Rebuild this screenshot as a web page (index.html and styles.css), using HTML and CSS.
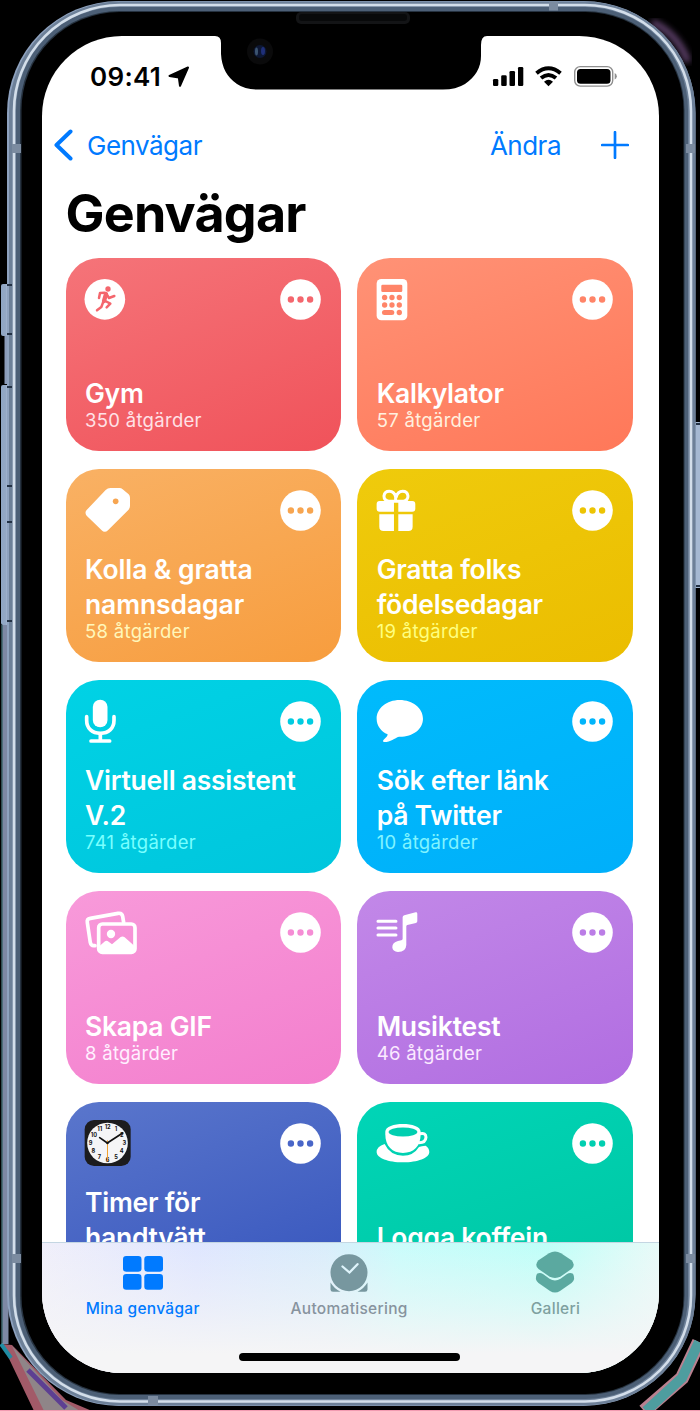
FILE: index.html
```html
<!DOCTYPE html>
<html lang="sv">
<head>
<meta charset="utf-8">
<title>Genvägar</title>
<link rel="stylesheet" href="styles.css">
</head>
<body>
<div class="stage">
<svg class="device" viewBox="0 0 700 1411" width="700" height="1411" aria-hidden="true">
  <defs>
    <filter id="soft"><feGaussianBlur stdDeviation="0.6"/></filter>
    <filter id="haze"><feGaussianBlur stdDeviation="3"/></filter>
    <linearGradient id="button"><stop offset="0" stop-color="#8fa6c4"/><stop offset=".45" stop-color="#94a8c5"/><stop offset=".7" stop-color="#c3d3e8"/><stop offset="1" stop-color="#536986"/></linearGradient>
  </defs>
  <path d="M652 22 Q678 34 688 62" stroke="#6b4a78" stroke-width="6" fill="none" filter="url(#haze)"/>
  <path d="M2 1344 L34 1411 H92 L66 1400 L12 1345Z" fill="#a25a68"/>
  <path d="M12 1346 L44 1411 H80 L62 1400Z" fill="#8f8588"/>
  <path d="M28 1370 L66 1408" stroke="#5d3f92" stroke-width="5"/>
  <path d="M1 1344 L11 1358" stroke="#218ca3" stroke-width="4"/>
  <path d="M699 1342 L682 1378 L644 1411" stroke="#b9808f" stroke-width="14" fill="none"/>
  <path d="M699 1342 L682 1378 L646 1411" stroke="#4e9d9f" stroke-width="10" fill="none"/>
  <path d="M0 1410.500 H700" stroke="#f29bb1"/>
  <path d="M5.500 625 V1344" stroke="#7d88a4" stroke-width="6"/>
  <path d="M2 625 V1344" stroke="#5f97a2"/>
  <rect x="1" y="284" width="11" height="52" rx="2" fill="url(#button)"/>
  <rect x="1" y="385" width="11" height="240" rx="2" fill="url(#button)"/>
  <path d="M7 336 V384" stroke="#8b9bb9" stroke-width="5"/>
  <rect x="691" y="422" width="10" height="166" rx="2" fill="#a5b8d2"/>
  <rect x="7" y="1" width="688.500" height="1405" rx="112" fill="#8ea2bf"/>
  <rect x="9" y="1.500" width="686.500" height="1404" rx="111" fill="#6d8098"/>
  <rect x="16" y="7" width="672" height="1392" rx="103" fill="#4c5f76"/>
  <rect x="14" y="5" width="677" height="1396.500" rx="106" fill="none" stroke="#d3deea" stroke-width="2.600" filter="url(#soft)"/>
  <rect x="20" y="11" width="664.500" height="1384" rx="99" fill="#27333f" filter="url(#soft)"/>
  <rect x="21.500" y="12" width="662" height="1382" rx="98" fill="#000"/>
  <g fill="#7b8ba0">
    <path d="M549 1.500h9v9h-9zM12 144h9v9h-9zM686 144h9v9h-9zM12 1254h9v9h-9zM686 1254h9v9h-9zM148 1396h10v9h-10z"/>
  </g>
  <g stroke="#233144" stroke-width="2">
    <path d="M7 285h5M7 334h5M7 387h5M7 486h5M7 522h5M7 621h5M696 424h4M696 586h4"/>
  </g>
  <rect x="296" y="12" width="114" height="12" rx="5" fill="#131416"/>
  <rect x="299" y="14" width="108" height="7" rx="3" fill="#08090a"/>
</svg>

<main class="screen">
  <svg class="notch" width="274" height="56" viewBox="0 0 274 56" aria-hidden="true">
    <path d="M0 0 Q6 0 6 7 V18 Q7 38 22 48 Q30 53.500 42 53.500 H228 Q241 53.500 250 48 Q266 37 266 20 V9 Q266 0 272 0 Z" fill="#000"/>
    <circle cx="45" cy="15.500" r="13" fill="#0a0a0b"/><circle cx="45" cy="15.500" r="6.500" fill="#0d1733"/><ellipse cx="41.500" cy="15.500" rx="1.500" ry="4" fill="#3c5470"/><ellipse cx="48" cy="15" rx="2" ry="4" fill="#1f2f78"/>
  </svg>

  <header class="status">
    <div class="time"><span>09:41</span>
      <svg width="22" height="22" viewBox="0 0 22 22"><path d="M20 1.500 L12 19.800 L10.800 11.400 L1.500 10Z" stroke="#000" stroke-width="2" stroke-linejoin="round"/></svg>
    </div>
    <svg class="signals" width="126" height="24" viewBox="0 0 126 24">
      <rect x="1" y="14" width="5.300" height="7" rx="1.300"/><rect x="9.200" y="10.300" width="5.500" height="10.700" rx="1.300"/><rect x="17.500" y="6" width="5.500" height="15" rx="1.300"/><rect x="26" y="2" width="5.300" height="19" rx="1.300"/>
      <g fill="none" stroke="#000" stroke-width="4"><path d="M44.500 8.200 Q56.500 -1.600 68.500 8.200"/><path d="M49 13 Q56.500 7 64 13"/></g>
      <path d="M52 16.700 Q56.500 13 61 16.700 L56.500 21.300Z"/>
      <rect x="82.700" y="1.600" width="38" height="19.500" rx="5.500" fill="none" stroke="#8f8f8f" stroke-width="1.400"/>
      <rect x="85" y="4" width="33.500" height="14.700" rx="3.500"/><path d="M122.700 8 Q124.800 9 124.800 11.300 T122.700 14.500Z" fill="#8f8f8f"/>
    </svg>
  </header>

  <nav class="nav">
    <a class="back"><svg width="19" height="32" viewBox="0 0 19 32"><path d="M16.500 2.500 L2.500 16 L16.500 29.500" /></svg><span>Genvägar</span></a>
    <a class="edit">Ändra</a>
    <svg class="plus" width="28" height="28" viewBox="0 0 28 28"><path d="M14 1.200V26.800M1.200 14H26.800"/></svg>
  </nav>
  <h1>Genvägar</h1>

  <section class="cards">
    <article class="card red">
      <div class="top"><svg class="icon" viewBox="0 0 56 50"><g transform="translate(-25 -26) scale(.33333)"><circle cx="134.500" cy="148" r="61"/><circle class="cut" cx="144" cy="117" r="8"/><g class="line" stroke-width="7.500"><path d="M117 144 L120 129 L134 128"/><path d="M139 131 L147 144 L163 138"/><path d="M136 153 L151 161 L140 172"/><path d="M130 155 L124 171 L111 181"/><path d="M138 132 L132 153" stroke-width="13"/></g></g></svg>
      <svg class="more" viewBox="0 0 41 41"><circle cx="20.500" cy="20.500" r="20.300"/><path class="cut" d="M7.700 20.500a3.200 3.200 0 1 0 6.400 0a3.200 3.200 0 1 0-6.400 0M17.300 20.500a3.200 3.200 0 1 0 6.400 0a3.200 3.200 0 1 0-6.400 0M26.900 20.500a3.200 3.200 0 1 0 6.400 0a3.200 3.200 0 1 0-6.400 0"/></svg></div>
      <h2>Gym</h2><p>350 åtgärder</p>
    </article>
    <article class="card coral">
      <div class="top"><svg class="icon" viewBox="0 0 56 50"><g transform="translate(-26.700 -26) scale(.33333)"><rect x="79" y="87" width="92" height="124" rx="14"/><g class="cut"><rect x="93" y="104" width="63" height="22" rx="4"/><circle cx="103" cy="142.500" r="8"/><circle cx="125" cy="142.500" r="8"/><circle cx="147" cy="142.500" r="8"/><circle cx="103" cy="165" r="8"/><circle cx="125" cy="165" r="8"/><circle cx="147" cy="165" r="8"/><rect x="95" y="180" width="37" height="15" rx="7.500"/><circle cx="147" cy="187.500" r="8"/></g></g></svg>
      <svg class="more" viewBox="0 0 41 41"><circle cx="20.500" cy="20.500" r="20.300"/><path class="cut" d="M7.700 20.500a3.200 3.200 0 1 0 6.400 0a3.200 3.200 0 1 0-6.400 0M17.300 20.500a3.200 3.200 0 1 0 6.400 0a3.200 3.200 0 1 0-6.400 0M26.900 20.500a3.200 3.200 0 1 0 6.400 0a3.200 3.200 0 1 0-6.400 0"/></svg></div>
      <h2>Kalkylator</h2><p>57 åtgärder</p>
    </article>
    <article class="card orange">
      <div class="top"><svg class="icon" viewBox="0 0 56 50"><g transform="translate(-25 -27) scale(.33333)"><path d="M151 84 H178 Q184 84 188 88 L206 103 Q210 107 210 113 V138 Q210 145 205 150 L144 211 Q134 220 125 211 L80 167 Q73 158 80 150 L137 90 Q143 84 151 84Z"/><circle class="cut" cx="167" cy="124" r="8.500"/></g></svg>
      <svg class="more" viewBox="0 0 41 41"><circle cx="20.500" cy="20.500" r="20.300"/><path class="cut" d="M7.700 20.500a3.200 3.200 0 1 0 6.400 0a3.200 3.200 0 1 0-6.400 0M17.300 20.500a3.200 3.200 0 1 0 6.400 0a3.200 3.200 0 1 0-6.400 0M26.900 20.500a3.200 3.200 0 1 0 6.400 0a3.200 3.200 0 1 0-6.400 0"/></svg></div>
      <h2 class="wide">Kolla &amp; gratta<br>namnsdagar</h2><p>58 åtgärder</p>
    </article>
    <article class="card yellow">
      <div class="top"><svg class="icon" viewBox="0 0 56 50"><g transform="translate(-26.700 -27) scale(.33333)"><path d="M131 123V155H88Q79 155 79 146V132Q79 123 88 123ZM144 123V155H186Q195 155 195 146V132Q195 123 186 123ZM131 163V213H100Q87 213 87 200V163ZM144 163V213H174Q187 213 187 200V163Z"/><path class="wire" stroke-width="9" d="M132 124 H115 Q101 121 101 108 Q103 94 117 94 Q132 94 136 111 V124 M142 124 H160 Q173 121 173 108 Q171 94 157 94 Q142 94 138 111"/></g></svg>
      <svg class="more" viewBox="0 0 41 41"><circle cx="20.500" cy="20.500" r="20.300"/><path class="cut" d="M7.700 20.500a3.200 3.200 0 1 0 6.400 0a3.200 3.200 0 1 0-6.400 0M17.300 20.500a3.200 3.200 0 1 0 6.400 0a3.200 3.200 0 1 0-6.400 0M26.900 20.500a3.200 3.200 0 1 0 6.400 0a3.200 3.200 0 1 0-6.400 0"/></svg></div>
      <h2>Gratta folks<br>födelsedagar</h2><p>19 åtgärder</p>
    </article>
    <article class="card cyan">
      <div class="top"><svg class="icon" viewBox="0 0 56 50"><g transform="translate(-25 -18) scale(.33333)"><rect x="98.500" y="59" width="44" height="83" rx="22"/><path class="wire" stroke-width="11" d="M80 110V121C80 146 97 160 121 160S162 146 162 121V110M121 160V182M93 183H149"/></g></svg>
      <svg class="more" viewBox="0 0 41 41"><circle cx="20.500" cy="20.500" r="20.300"/><path class="cut" d="M7.700 20.500a3.200 3.200 0 1 0 6.400 0a3.200 3.200 0 1 0-6.400 0M17.300 20.500a3.200 3.200 0 1 0 6.400 0a3.200 3.200 0 1 0-6.400 0M26.900 20.500a3.200 3.200 0 1 0 6.400 0a3.200 3.200 0 1 0-6.400 0"/></svg></div>
      <h2>Virtuell assistent<br>V.2</h2><p>741 åtgärder</p>
    </article>
    <article class="card blue">
      <div class="top"><svg class="icon" viewBox="0 0 56 50"><g transform="translate(-26.700 -238) scale(.33333)"><path d="M148 720C188 720 218 745 218 776C218 808 187 831 146 830C133 834 121 846 102 846Q95 845 100 839Q112 830 112 823C92 814 79 797 79 776C79 745 109 720 148 720Z"/></g></svg>
      <svg class="more" viewBox="0 0 41 41"><circle cx="20.500" cy="20.500" r="20.300"/><path class="cut" d="M7.700 20.500a3.200 3.200 0 1 0 6.400 0a3.200 3.200 0 1 0-6.400 0M17.300 20.500a3.200 3.200 0 1 0 6.400 0a3.200 3.200 0 1 0-6.400 0M26.900 20.500a3.200 3.200 0 1 0 6.400 0a3.200 3.200 0 1 0-6.400 0"/></svg></div>
      <h2>Sök efter länk<br>på Twitter</h2><p>10 åtgärder</p>
    </article>
    <article class="card pink">
      <div class="top"><svg class="icon" viewBox="0 0 56 50"><g transform="translate(-25 -229) scale(.33333)"><path class="wire" stroke-width="11" d="M105 797H101Q93 797 91 788L82 728Q80 717 91 715L174 700Q186 698 188 709L191 727"/><rect class="wire" x="116" y="732" width="109" height="85" rx="11" stroke-width="11"/><circle cx="153" cy="762" r="12.500"/><path d="M116 800L135 784Q140 780 146 785L156 793L182 771Q188 767 194 772L226 800V817H116Z"/></g></svg>
      <svg class="more" viewBox="0 0 41 41"><circle cx="20.500" cy="20.500" r="20.300"/><path class="cut" d="M7.700 20.500a3.200 3.200 0 1 0 6.400 0a3.200 3.200 0 1 0-6.400 0M17.300 20.500a3.200 3.200 0 1 0 6.400 0a3.200 3.200 0 1 0-6.400 0M26.900 20.500a3.200 3.200 0 1 0 6.400 0a3.200 3.200 0 1 0-6.400 0"/></svg></div>
      <h2>Skapa GIF</h2><p>8 åtgärder</p>
    </article>
    <article class="card purple">
      <div class="top"><svg class="icon" viewBox="0 0 56 50"><g transform="translate(-26.700 -29) scale(.33333)"><path class="wire" stroke-width="9" d="M83 124H137M83 144H137M83 165H137"/><path d="M157 112Q157 107 162 106L196 97Q201 96 201 101V124Q201 128 197 129L171 135Q168 136 168 139V195Q167 216 143 216Q127 215 126 202Q126 187 143 183L153 181Q157 180 157 176Z"/></g></svg>
      <svg class="more" viewBox="0 0 41 41"><circle cx="20.500" cy="20.500" r="20.300"/><path class="cut" d="M7.700 20.500a3.200 3.200 0 1 0 6.400 0a3.200 3.200 0 1 0-6.400 0M17.300 20.500a3.200 3.200 0 1 0 6.400 0a3.200 3.200 0 1 0-6.400 0M26.900 20.500a3.200 3.200 0 1 0 6.400 0a3.200 3.200 0 1 0-6.400 0"/></svg></div>
      <h2>Musiktest</h2><p>46 åtgärder</p>
    </article>
    <article class="card peek indigo">
      <div class="top"><svg class="icon" viewBox="0 0 56 50"><g transform="translate(-85 -30) scale(.33333)"><rect x="254" y="90" width="138" height="138" rx="28" fill="#1c1c1e"/><circle cx="322.500" cy="159" r="61" fill="#f5f5f7"/>
        <g class="dial"><text x="323" y="118">12</text><text x="348" y="124">1</text><text x="365" y="141">2</text><text x="373" y="166">3</text><text x="365" y="190">4</text><text x="348" y="208">5</text><text x="323" y="215">6</text><text x="298" y="208">7</text><text x="280" y="190">8</text><text x="272" y="166">9</text><text x="282" y="142">10</text><text x="299" y="124">11</text></g>
        <path d="M322 159L299 143M322 159L368 129" stroke="#111" stroke-width="5" stroke-linecap="round"/><path d="M322.500 151V214" stroke="#f0a02c" stroke-width="3"/><circle cx="322.500" cy="159" r="3.500" fill="#111"/></g></svg>
      <svg class="more" viewBox="0 0 41 41"><circle cx="20.500" cy="20.500" r="20.300"/><path class="cut" d="M7.700 20.500a3.200 3.200 0 1 0 6.400 0a3.200 3.200 0 1 0-6.400 0M17.300 20.500a3.200 3.200 0 1 0 6.400 0a3.200 3.200 0 1 0-6.400 0M26.900 20.500a3.200 3.200 0 1 0 6.400 0a3.200 3.200 0 1 0-6.400 0"/></svg></div>
      <h2>Timer för<br>handtvätt</h2>
    </article>
    <article class="card peek green">
      <div class="top"><svg class="icon" viewBox="0 0 56 50"><g transform="translate(-26.700 -30) scale(.33333)"><path d="M103 162Q79 170 79 186C79 204 114 217 158 217S237 204 237 186Q237 174 226 167Q214 168 206 171Q190 197 158 197Q119 196 103 162Z"/><path d="M105 125C105 94 211 94 211 125V133C211 169 190 189 158 189S105 169 105 133Z"/><path class="wire" stroke-width="9" d="M209 131Q227 127 227 142Q226 158 206 158"/><ellipse class="cut" cx="158" cy="126" rx="43" ry="13.500"/></g></svg>
      <svg class="more" viewBox="0 0 41 41"><circle cx="20.500" cy="20.500" r="20.300"/><path class="cut" d="M7.700 20.500a3.200 3.200 0 1 0 6.400 0a3.200 3.200 0 1 0-6.400 0M17.300 20.500a3.200 3.200 0 1 0 6.400 0a3.200 3.200 0 1 0-6.400 0M26.900 20.500a3.200 3.200 0 1 0 6.400 0a3.200 3.200 0 1 0-6.400 0"/></svg></div>
      <h2>Logga koffein</h2>
    </article>
  </section>

  <footer class="tabbar">
    <div class="tabs">
      <a class="tab active"><svg width="42" height="44" viewBox="0 0 42 44"><rect x="1" y="5" width="18.500" height="15.700" rx="3.200"/><rect x="22.300" y="5" width="18.700" height="15.700" rx="3.200"/><rect x="1" y="23" width="18.500" height="15.700" rx="3.200"/><rect x="22.300" y="23" width="18.700" height="15.700" rx="3.200"/></svg><span>Mina genvägar</span></a>
      <a class="tab auto"><svg width="42" height="44" viewBox="0 0 42 44"><path d="M21 3.200A18.500 18.500 0 1 1 21 40.200A18.500 18.500 0 1 1 21 3.200Z"/><path d="M2.500 31.500Q6 37.500 12.500 40.700H5Q2.500 40.700 2.500 38.500ZM39.500 31.500Q36 37.500 29.500 40.700H37Q39.500 40.700 39.500 38.500Z"/><path d="M14.500 15.500L21.500 21.500L29.500 13.200" fill="none" stroke="#dff4fb" stroke-width="2.300" stroke-linecap="round"/></svg><span>Automatisering</span></a>
      <a class="tab gallery"><svg width="42" height="44" viewBox="0 0 42 44"><path d="M3 22.800Q6 21.200 9 23L15.500 27.800Q21 31 26.500 27.800L33 23Q36 21.200 39 22.800Q42 28.500 37.500 32L26 40Q21 43.200 16 40L4.500 32Q0 28.500 3 22.800Z"/><path d="M15 2.200Q21 -1.400 27 2.200L37.500 9.200Q42 13.700 37.500 18L27 25.200Q21 28.800 15 25.200L4.500 18Q0 13.700 4.500 9.200Z"/></svg><span>Galleri</span></a>
    </div>
    <div class="home"></div>
  </footer>
</main>
</div>
</body>
</html>
```

FILE: styles.css
```css
* { box-sizing: border-box; }
body { margin: 0; background: #000; font-family: Inter, "Liberation Sans", sans-serif; }
svg { display: block; flex: none; }

.stage { position: relative; width: 700px; height: 1411px; padding: 36px 41px 38px 42px; overflow: hidden; }
.device { position: absolute; inset: 0; }

.screen { position: relative; height: 1337px; background: #fff; border-radius: 80px; overflow: hidden; display: flex; flex-direction: column; }
.notch { position: absolute; left: 173px; top: 0; }

.status { height: 80px; flex: none; display: flex; justify-content: space-between; align-items: flex-start; padding: 25px 41px 0 48px; }
.time { display: flex; gap: 7px; align-items: center; font-size: 26px; line-height: 32px; font-weight: 600; letter-spacing: .3px; }
.signals { margin-top: 4px; }

.nav { height: 60px; flex: none; display: flex; align-items: center; padding: 0 30px 2px 12px; color: #007aff; font-size: 26px; letter-spacing: -.5px; }
.back { display: flex; align-items: center; gap: 14px; margin-right: auto; }
.back path, .plus path { fill: none; stroke: #007aff; stroke-linecap: round; stroke-linejoin: round; }
.back path { stroke-width: 4; }
.plus path { stroke-width: 2.700; }
.edit { margin-right: 40px; }

h1 { margin: 0; flex: none; height: 81.500px; padding: 6px 0 0 23.500px; font-size: 52px; line-height: 63px; font-weight: 700; letter-spacing: -.8px; }

.cards { flex: 1; min-height: 0; overflow: hidden; display: grid; grid-template-columns: 1fr 1fr; grid-auto-rows: 193px; gap: 18px 16px; padding: 0 26px 0 23.700px; align-content: start; }
.card { border-radius: 33px; padding: 18px 20.500px 21px 19.300px; display: flex; flex-direction: column; color: #fff; background: linear-gradient(160deg, var(--from), var(--to)); }
.card.peek { padding-bottom: 40px; }
.top { display: flex; justify-content: space-between; align-items: flex-start; margin-bottom: auto; }
.icon { width: 56px; height: 50px; fill: #fff; overflow: visible; }
.more { width: 41px; height: 41px; margin-top: 3px; fill: #fff; }
.cut { fill: var(--ink); }
.line { fill: none; stroke: var(--ink); stroke-linecap: round; stroke-linejoin: round; }
.wire { fill: none; stroke: #fff; stroke-linecap: round; stroke-linejoin: round; }
.card h2 { margin: 0; font-size: 26.500px; line-height: 35px; font-weight: 600; letter-spacing: -.25px; white-space: nowrap; }
.card h2.wide { letter-spacing: -.1px; }
.card p { margin: 0; font-size: 18.500px; line-height: 19px; color: var(--sub); letter-spacing: .3px; }

.red { --from: #f57479; --to: #f0525a; --ink: #f4666d; --sub: #ffe1e6; }
.coral { --from: #ff9276; --to: #ff7859; --ink: #ff8468; --sub: #fff0df; }
.orange { --from: #f9b164; --to: #f79d3e; --ink: #f7a550; --sub: #fff7ba; }
.yellow { --from: #efcb0c; --to: #ebbd00; --ink: #edc403; --sub: #ffff80; }
.cyan { --from: #00d2e5; --to: #00c6dd; --ink: #00cce1; --sub: #79ffff; }
.blue { --from: #00bbfc; --to: #00affa; --ink: #00b5fb; --sub: #82f4ff; }
.pink { --from: #f89ada; --to: #f37ecd; --ink: #f58dd5; --sub: #fff0ff; }
.purple { --from: #c288e8; --to: #b16de1; --ink: #bb7de6; --sub: #fbeaff; }
.indigo { --from: #5a76cc; --to: #3655bd; --ink: #4966c8; --sub: #dce4ff; }
.green { --from: #00d5b7; --to: #00c6a2; --ink: #00cfb0; --sub: #b0ffee; }

.dial { fill: #111; font-size: 17px; font-weight: 700; text-anchor: middle; }

.tabbar { height: 131px; flex: none; border-top: 1px solid #c4d6e2; padding-top: 8px; background: linear-gradient(180deg, rgba(245,245,246,0) 0, rgba(245,245,246,.55) 50%, #f5f5f6 85%), linear-gradient(90deg, #f0effa 0, #dfe6ff 25%, #d9edfb 46%, #c9fcfb 58%, #befff8 82%, #e8faf8 100%); }
.tabs { display: grid; grid-template-columns: repeat(3, 206.400px); margin-left: -2.500px; }
.tab { display: flex; flex-direction: column; align-items: center; font-size: 15.500px; font-weight: 500; line-height: 20px; gap: 4px; color: #87939e; letter-spacing: .3px; }
.tab.active { color: #007aff; fill: #007aff; }
.auto { fill: #77979f; }
.gallery { fill: #5ba9a0; color: #7ea09f; }
.home { width: 221px; height: 8px; border-radius: 4px; background: #000; margin: 34px auto 0 197px; }
```
